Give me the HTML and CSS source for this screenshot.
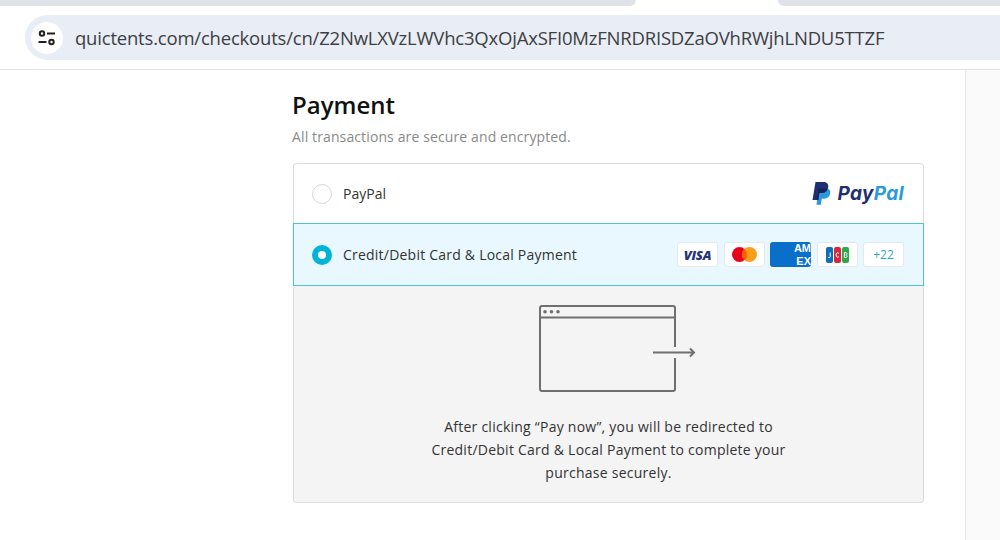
FILE: index.html
```html
<!DOCTYPE html>
<html lang="en">
<head>
    <meta charset="UTF-8">
    <title>Checkout</title>
    <link rel="stylesheet" href="styles.css">
</head>
<body>
    <div class="tab-strip">
        <div class="tab tab-left"></div>
        <div class="tab-active"></div>
        <div class="tab tab-right"></div>
    </div>
    <div class="toolbar">
        <div class="address-bar">
            <div class="site-icon">
                <svg width="18" height="16" viewBox="0 0 18 16" fill="none" stroke="#1f1f1f" stroke-width="2">
                    <circle cx="4" cy="3.5" r="2.2"/>
                    <path d="M9 3.5h8"/>
                    <path d="M0.5 12h8"/>
                    <circle cx="13.5" cy="12" r="2.2"/>
                </svg>
            </div>
            <span class="url">quictents.com/checkouts/cn/Z2NwLXVzLWVhc3QxOjAxSFI0MzFNRDRISDZaOVhRWjhLNDU5TTZF</span>
        </div>
    </div>

    <div class="page">
        <main class="main-col">
            <h1 class="title">Payment</h1>
            <p class="subtitle">All transactions are secure and encrypted.</p>

            <div class="pay-card">
                <div class="pay-row pay-row-first">
                    <span class="radio"></span>
                    <span class="pay-label">PayPal</span>
                    <div class="paypal-logo">
                        <svg width="20" height="24" viewBox="0 0 20 24">
                            <path fill="#2a9bd8" d="M6.5 6.5h7.5c3 0 4.8 1.900 4.200 5-.6 3.300-2.900 5.200-6 5.200H9.800l-1 6H4.500z"/>
                            <path fill="#1f2f73" d="M3.500 0h7.500c3.700 0 5.800 1.900 5.200 5.300-.6 3.700-3.300 5.800-6.800 5.800H7.300l-1.100 6.900H0.500z"/>
                            <path fill="#16205c" d="M6.500 6.500h8.900c-.8 3-3.200 4.600-6.200 4.600H7.300l-1.100 6.900h-1.500z"/>
                        </svg>
                        <span class="pp-word"><span class="pp-dark">Pay</span><span class="pp-light">Pal</span></span>
                    </div>
                </div>
                <div class="pay-row pay-row-active">
                    <span class="radio radio-on"></span>
                    <span class="pay-label pay-label-wide">Credit/Debit Card &amp; Local Payment</span>
                    <div class="card-list">
                        <span class="card-badge visa">VISA</span>
                        <span class="card-badge">
                            <svg width="25" height="15" viewBox="0 0 25 15">
                                <circle cx="7.500" cy="7.500" r="7.500" fill="#eb001b"/>
                                <circle cx="17.500" cy="7.500" r="7.500" fill="#f79e1b"/>
                                <path fill="#ff5f00" d="M12.500 1.650a7.500 7.500 0 0 1 0 11.700a7.500 7.500 0 0 1 0-11.700z"/>
                            </svg>
                        </span>
                        <span class="card-badge amex"><span class="amex-text">AM<br>EX</span></span>
                        <span class="card-badge">
                            <svg width="23" height="16" viewBox="0 0 23 16">
                                <rect x="0" y="0" width="7" height="16" rx="2" fill="#0e6fb8"/>
                                <rect x="8" y="0" width="7" height="16" rx="2" fill="#d9263c"/>
                                <rect x="16" y="0" width="7" height="16" rx="2" fill="#2fa84a"/>
                                <path d="M4.200 5.500v4.300c0 1.100-1.700 1.100-2.300.2M12.900 6.300c-1-1-2.900-.6-2.900 1.700s1.900 2.700 2.900 1.700M18.400 5.500v5h1.500c1.500 0 1.500-2.500-.1-2.500 1.400 0 1.400-2.500-.1-2.500z" fill="none" stroke="#fff" stroke-width="1"/>
                            </svg>
                        </span>
                        <span class="card-badge more">+22</span>
                    </div>
                </div>
                <div class="pay-detail">
                    <svg class="redirect-icon" width="158" height="90" viewBox="0 0 158 90" fill="none" stroke="#6f6f6f" stroke-width="2">
                        <path d="M136 42V3a2 2 0 0 0-2-2H3a2 2 0 0 0-2 2v81a2 2 0 0 0 2 2h131a2 2 0 0 0 2-2V53"/>
                        <path d="M1 12.500h135"/>
                        <circle cx="6" cy="6.800" r="1.800" fill="#6f6f6f" stroke="none"/>
                        <circle cx="12.500" cy="6.800" r="1.800" fill="#6f6f6f" stroke="none"/>
                        <circle cx="19" cy="6.800" r="1.800" fill="#6f6f6f" stroke="none"/>
                        <path d="M114 47.500h40"/>
                        <path d="M151 43.500l4 4-4 4"/>
                    </svg>
                    <p class="detail-text">After clicking “Pay now”, you will be redirected to<br>Credit/Debit Card &amp; Local Payment to complete your<br>purchase securely.</p>
                </div>
            </div>
        </main>
        <aside class="side-col"></aside>
    </div>
</body>
</html>
```

FILE: styles.css
```css
* {
    margin: 0;
    padding: 0;
    box-sizing: border-box;
}
html, body {
    height: 540px;
    overflow: hidden;
}
body {
    display: flex;
    flex-direction: column;
    background: #fff;
    font-family: "Open Sans", "Noto Sans", sans-serif;
    color: #333;
}
/* browser chrome */
.tab-strip {
    display: flex;
    height: 6px;
    flex-shrink: 0;
    background: #fff;
}
.tab {
    background: #dfe3e8;
    height: 6px;
}
.tab-left {
    width: 636px;
    border-bottom-right-radius: 8px;
}
.tab-active {
    width: 142px;
}
.tab-right {
    flex: 1;
    border-bottom-left-radius: 8px;
}
.toolbar {
    height: 64px;
    flex-shrink: 0;
    padding: 9px 0 0 25px;
    border-bottom: 1px solid #e4e4e6;
}
.address-bar {
    display: flex;
    align-items: center;
    height: 45px;
    padding-left: 6px;
    border-radius: 23px 0 0 23px;
    background: #e9edf6;
}
.site-icon {
    display: flex;
    align-items: center;
    justify-content: center;
    width: 32px;
    height: 32px;
    border-radius: 50%;
    background: #fff;
}
.url {
    margin-left: 12px;
    font-size: 18.5px;
    letter-spacing: -0.2px;
    color: #3c4043;
    white-space: nowrap;
}
/* page */
.page {
    flex: 1;
    display: flex;
}
.main-col {
    width: 965px;
    padding: 20px 0 0 293px;
}
.side-col {
    flex: 1;
    background: #fafafa;
    border-left: 1px solid #e6e6e6;
}
.title {
    margin-left: -1px;
    font-size: 24px;
    line-height: 30px;
    font-weight: 600;
    color: #111;
}
.subtitle {
    margin: 7px 0 0 -1px;
    font-size: 14px;
    line-height: 19px;
    letter-spacing: 0.12px;
    color: #8a8a8a;
}
.pay-card {
    width: 631px;
    margin-top: 17px;
}
.pay-row {
    display: flex;
    align-items: center;
    padding: 0 19px 0 18px;
}
.pay-row-first {
    height: 60px;
    border: 1px solid #dcdcdc;
    border-bottom: 0;
    border-radius: 4px 4px 0 0;
}
.pay-row-active {
    height: 63px;
    border: 1px solid #4dc3d3;
    background: #e8f8fe;
}
.radio {
    width: 20px;
    height: 20px;
    flex-shrink: 0;
    border: 1px solid #d9d9d9;
    border-radius: 50%;
    background: #fff;
}
.radio-on {
    border: 6px solid #00b4d8;
}
.pay-label {
    flex: 1;
    margin-left: 11px;
    font-size: 14px;
    color: #333;
}
.pay-label-wide {
    letter-spacing: 0.22px;
}
.paypal-logo {
    display: flex;
    align-items: center;
    gap: 6px;
}
.pp-word {
    font-family: "Inter", "Open Sans", sans-serif;
    font-size: 19px;
    font-weight: 700;
    font-style: italic;
    letter-spacing: 0.3px;
}
.pp-dark {
    color: #1f2f73;
}
.pp-light {
    color: #2a9bd8;
}
.card-list {
    display: flex;
    gap: 5.5px;
}
.card-badge {
    display: flex;
    align-items: center;
    justify-content: center;
    width: 41px;
    height: 25px;
    border: 1px solid #e3eaee;
    border-radius: 3px;
    background: #fff;
    overflow: hidden;
}
.visa {
    font-size: 13px;
    font-weight: 800;
    font-style: italic;
    letter-spacing: -0.3px;
    color: #26337a;
}
.amex {
    justify-content: flex-end;
    border: 0;
    background: #0a6fc9;
}
.amex-text {
    font-family: "Liberation Sans", sans-serif;
    font-size: 11px;
    line-height: 13px;
    font-weight: 700;
    color: #fff;
    text-align: right;
}
.more {
    font-size: 12px;
    color: #27a9c4;
}
.pay-detail {
    display: flex;
    flex-direction: column;
    align-items: center;
    height: 217px;
    padding-top: 19px;
    border: 1px solid #dcdcdc;
    border-top: 0;
    border-radius: 0 0 4px 4px;
    background: #f4f4f4;
}
.redirect-icon {
    margin-left: 19px;
}
.detail-text {
    margin-top: 20px;
    font-size: 14px;
    line-height: 23px;
    letter-spacing: 0.25px;
    text-align: center;
    color: #333;
}
```
